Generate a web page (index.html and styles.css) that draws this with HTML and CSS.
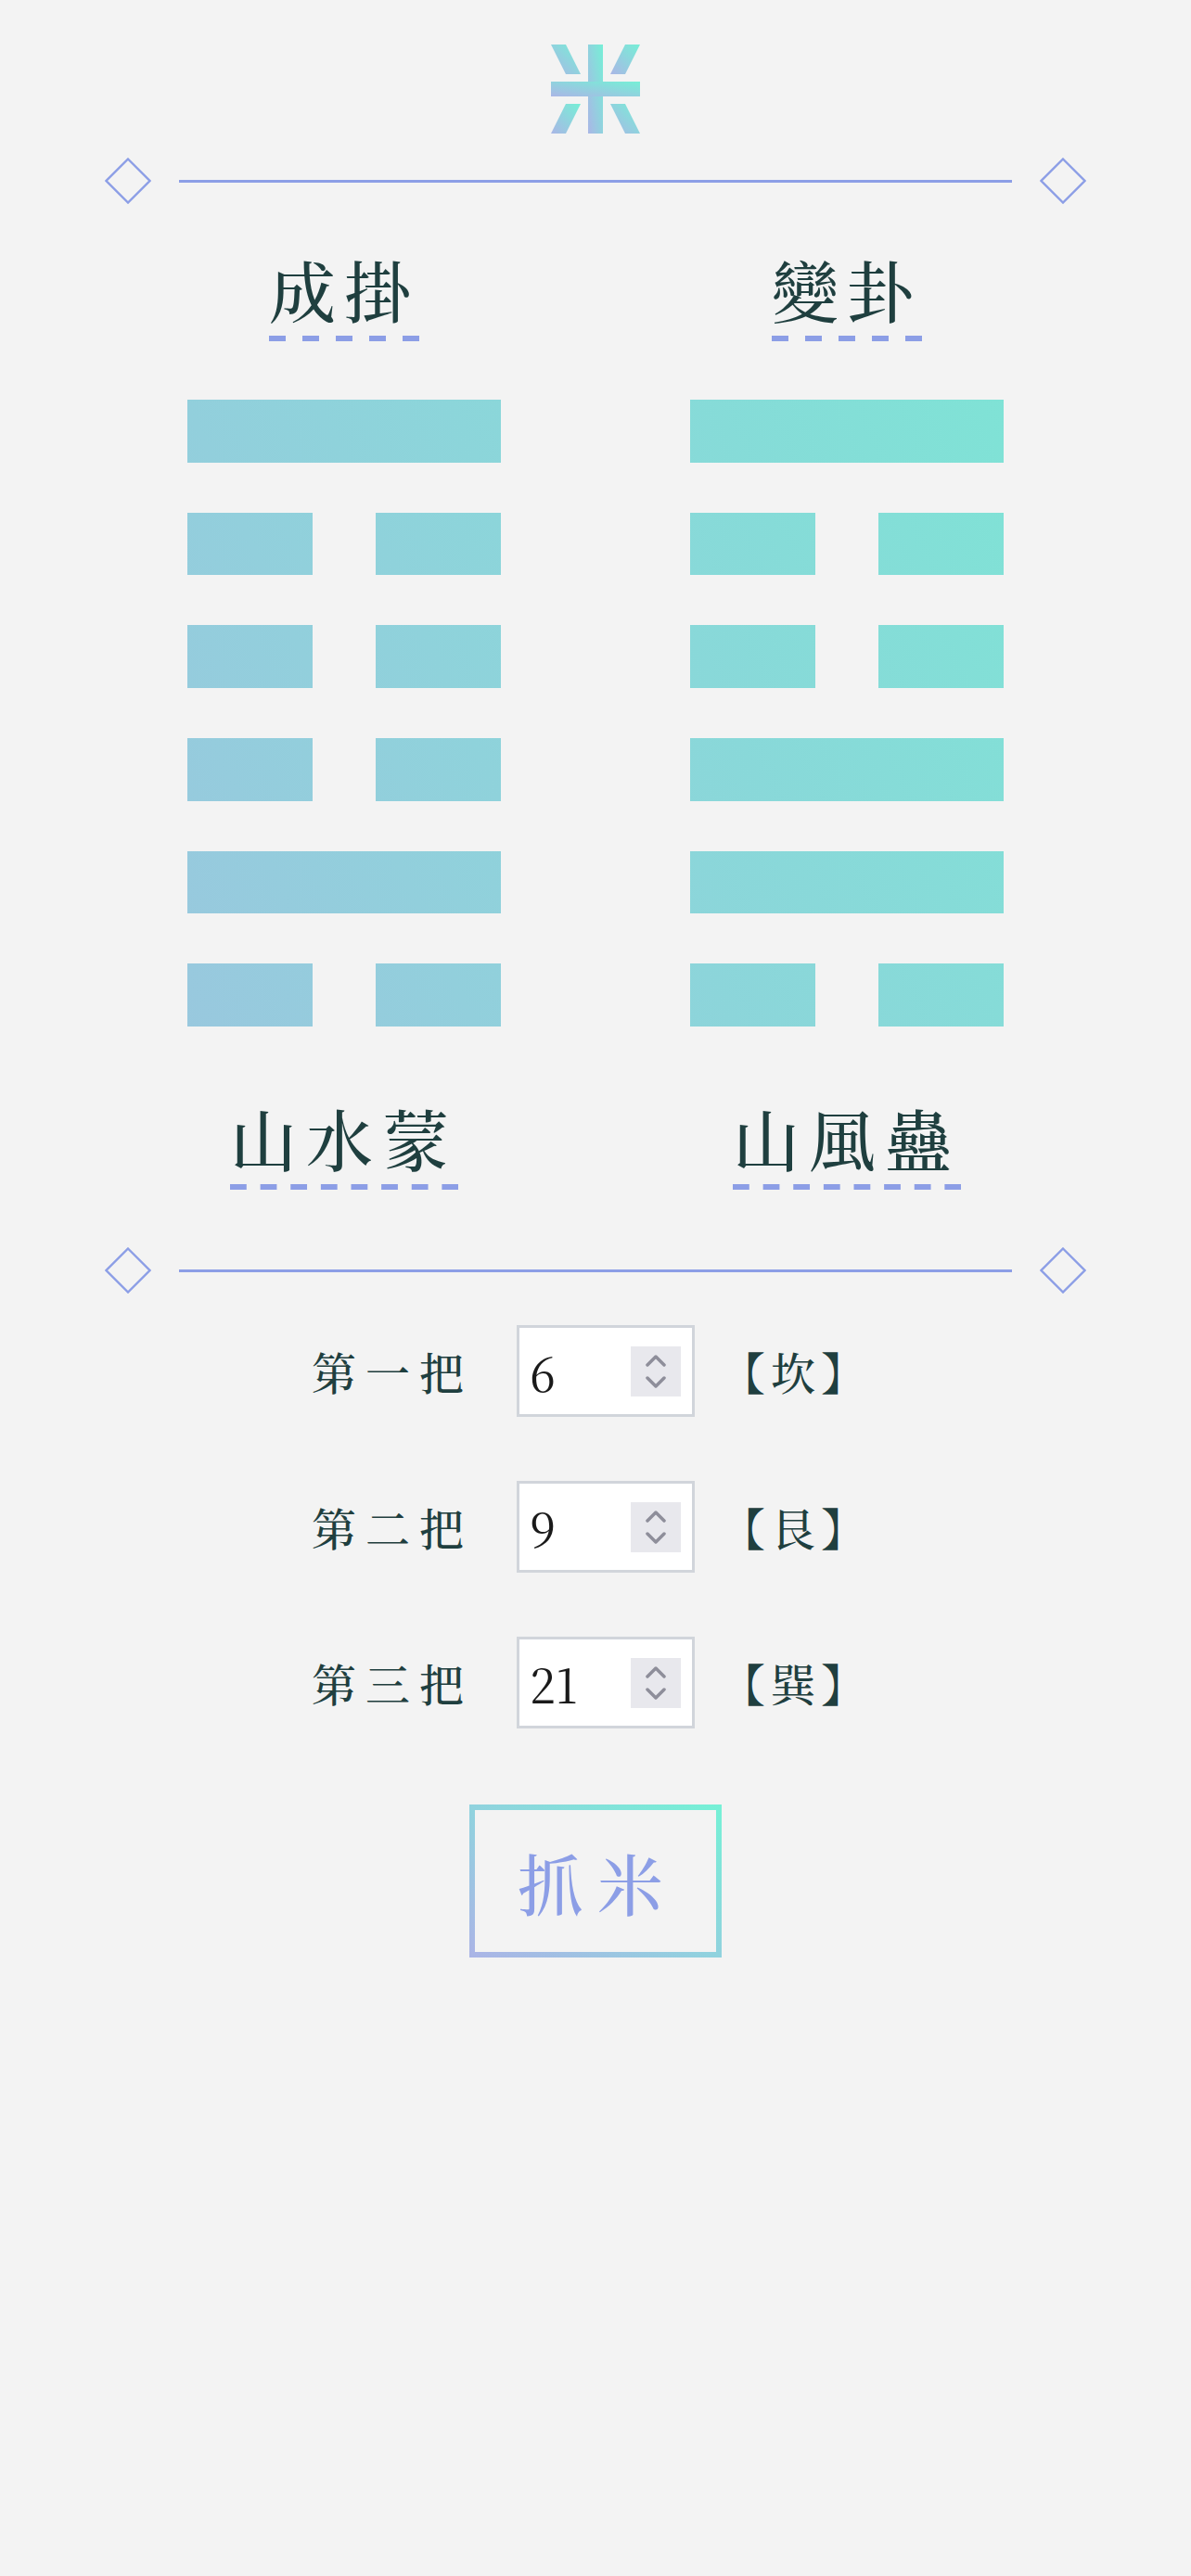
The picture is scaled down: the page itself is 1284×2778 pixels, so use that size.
FILE: index.html
```html
<!DOCTYPE html>
<html lang="zh-Hant">
<head>
<meta charset="utf-8">
<title>米</title>
<link rel="stylesheet" href="styles.css">
</head>
<body>
<main class="page">
  <header class="logo-wrap">
    <svg class="logo" width="96" height="96" viewBox="0 0 96 96" aria-label="米">
      <defs>
        <linearGradient id="lg" x1="0" y1="1" x2="1" y2="0">
          <stop offset="0" stop-color="#aab6e6"/>
          <stop offset="1" stop-color="#76efd6"/>
        </linearGradient>
      </defs>
      <g fill="url(#lg)">
        <rect x="40" y="0" width="16" height="96"/>
        <rect x="0" y="40" width="96" height="16"/>
        <polygon points="0,0 16,0 32,32 16,32"/>
        <polygon points="80,0 96,0 80,32 64,32"/>
        <polygon points="16,64 32,64 16,96 0,96"/>
        <polygon points="64,64 80,64 96,96 80,96"/>
      </g>
    </svg>
  </header>

  <div class="divider">
    <svg class="diamond" width="50" height="50" viewBox="0 0 50 50"><polygon points="25,1.5 48.5,25 25,48.5 1.5,25"/></svg>
    <div class="rule"></div>
    <svg class="diamond" width="50" height="50" viewBox="0 0 50 50"><polygon points="25,1.5 48.5,25 25,48.5 1.5,25"/></svg>
  </div>

  <section class="hexes">
    <div class="hex-col">
      <h2 class="title">成掛</h2>
      <div class="hexagram">
        <div class="bar yang"></div>
        <div class="bar yin"><span></span><span></span></div>
        <div class="bar yin"><span></span><span></span></div>
        <div class="bar yin"><span></span><span></span></div>
        <div class="bar yang"></div>
        <div class="bar yin"><span></span><span></span></div>
      </div>
      <h3 class="title name">山水蒙</h3>
    </div>
    <div class="hex-col">
      <h2 class="title">變卦</h2>
      <div class="hexagram">
        <div class="bar yang"></div>
        <div class="bar yin"><span></span><span></span></div>
        <div class="bar yin"><span></span><span></span></div>
        <div class="bar yang"></div>
        <div class="bar yang"></div>
        <div class="bar yin"><span></span><span></span></div>
      </div>
      <h3 class="title name">山風蠱</h3>
    </div>
  </section>

  <div class="divider divider-2">
    <svg class="diamond" width="50" height="50" viewBox="0 0 50 50"><polygon points="25,1.5 48.5,25 25,48.5 1.5,25"/></svg>
    <div class="rule"></div>
    <svg class="diamond" width="50" height="50" viewBox="0 0 50 50"><polygon points="25,1.5 48.5,25 25,48.5 1.5,25"/></svg>
  </div>

  <form class="form">
    <div class="row">
      <label class="label" for="n1">第一把</label>
      <div class="numbox">
        <input id="n1" class="num" type="number" value="6">
        <span class="spin"><svg width="22" height="36" viewBox="0 0 22 36"><polyline points="2,11 11,2 20,11"/><polyline points="2,25 11,34 20,25"/></svg></span>
      </div>
      <span class="gua">【坎】</span>
    </div>
    <div class="row">
      <label class="label" for="n2">第二把</label>
      <div class="numbox">
        <input id="n2" class="num" type="number" value="9">
        <span class="spin"><svg width="22" height="36" viewBox="0 0 22 36"><polyline points="2,11 11,2 20,11"/><polyline points="2,25 11,34 20,25"/></svg></span>
      </div>
      <span class="gua">【艮】</span>
    </div>
    <div class="row">
      <label class="label" for="n3">第三把</label>
      <div class="numbox">
        <input id="n3" class="num" type="number" value="21">
        <span class="spin"><svg width="22" height="36" viewBox="0 0 22 36"><polyline points="2,11 11,2 20,11"/><polyline points="2,25 11,34 20,25"/></svg></span>
      </div>
      <span class="gua">【巽】</span>
    </div>
    <button class="grab" type="button">抓米</button>
  </form>
</main>
</body>
</html>
```
FILE: styles.css
```css
* { box-sizing: border-box; }

html, body {
  margin: 0;
  padding: 0;
  background: #f3f3f3;
}

body {
  font-family: "Noto Serif CJK TC", "Noto Sans CJK TC", serif;
  font-weight: 500;
  color: #1f3f3f;
}

.page {
  width: 1084px;
  margin: 0 auto;
  padding-top: 48px;
}

.logo-wrap {
  display: flex;
  justify-content: center;
}

.logo { display: block; }

.divider {
  display: flex;
  align-items: center;
  gap: 30px;
  padding: 0 13px;
  margin-top: 26px;
}

.diamond { display: block; flex: none; }
.diamond polygon {
  fill: none;
  stroke: #8c9ee6;
  stroke-width: 2.4;
}

.rule {
  flex: 1;
  height: 3px;
  background: #8c9ee6;
}

.hexes {
  display: grid;
  grid-template-columns: 1fr 1fr;
}

.hex-col {
  display: flex;
  flex-direction: column;
  align-items: center;
}

.title {
  margin: 55px 0 0;
  font-size: 72px;
  font-weight: 500;
  line-height: 72px;
  letter-spacing: 9px;
  padding-bottom: 21px;
  background-image: linear-gradient(to right, #8c9ee6 18px, transparent 18px);
  background-size: 36px 6px;
  background-repeat: repeat-x;
  background-position: left bottom;
}

.title.name {
  margin-top: 83px;
  letter-spacing: 10px;
  background-image: linear-gradient(to right, #8c9ee6 17.5px, transparent 17.5px);
  background-size: 32.64px 6px;
}

.hexagram {
  width: 338px;
  margin-top: 63px;
  display: flex;
  flex-direction: column;
  gap: 54.1px;
}

.bar {
  height: 67.6px;
  display: flex;
  justify-content: space-between;
}

.bar.yang,
.bar.yin span {
  background: linear-gradient(to top right, #adb3e5, #77ebd3) fixed;
}

.bar.yin span {
  width: 40%;
}

.divider-2 {
  margin-top: 62px;
}

.form {
  margin-top: 34px;
  display: flex;
  flex-direction: column;
  align-items: center;
  gap: 69px;
}

.row {
  display: flex;
  align-items: center;
  justify-content: center;
  width: 100%;
}

.label {
  font-size: 48px;
  letter-spacing: 10px;
  line-height: 1;
  margin-right: 47px;
}

.numbox {
  width: 192px;
  height: 99px;
  border: 3px solid #d1d5db;
  background: #fff;
  display: flex;
  align-items: center;
  padding: 0 12px 0 11px;
}

.num {
  flex: 1;
  min-width: 0;
  border: 0;
  outline: none;
  background: transparent;
  padding: 0;
  font-family: "Noto Serif CJK TC", "Liberation Serif", serif;
  font-size: 50px;
  font-weight: 400;
  color: #1a1a1a;
  -moz-appearance: textfield;
}

.num::-webkit-inner-spin-button,
.num::-webkit-outer-spin-button {
  -webkit-appearance: none;
  margin: 0;
}

.spin {
  flex: none;
  width: 54px;
  height: 54px;
  background: #e8e8ed;
  display: flex;
  align-items: center;
  justify-content: center;
}

.spin svg { display: block; }
.spin polyline {
  fill: none;
  stroke: #8e8e9a;
  stroke-width: 3.5;
  stroke-linecap: round;
  stroke-linejoin: round;
}

.gua {
  font-size: 48px;
  line-height: 1;
  letter-spacing: 6px;
  margin-left: 28px;
  margin-right: 9px;
}

.grab {
  margin-top: 13px;
  width: 272px;
  height: 165px;
  border: 6px solid;
  border-image: linear-gradient(to top right, #aab5e6, #76f0d6) 1;
  background: transparent;
  font-family: "Noto Serif CJK TC", "Noto Sans CJK TC", serif;
  font-size: 72px;
  font-weight: 500;
  letter-spacing: 14px;
  color: #8c9ee6;
  padding: 0 0 0 3px;
  line-height: 1;
  cursor: pointer;
}
```
